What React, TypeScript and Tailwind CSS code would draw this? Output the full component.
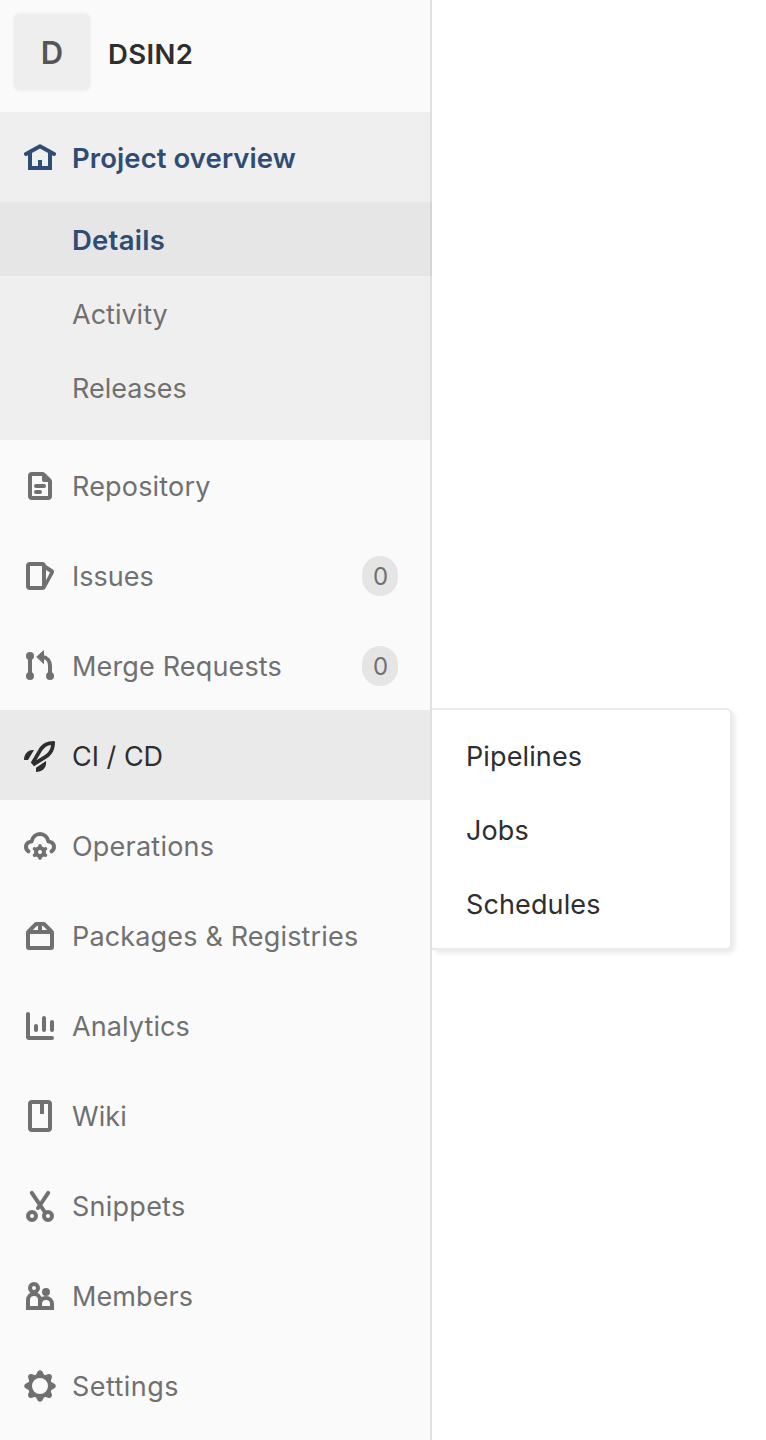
import type { ReactNode } from "react";

function Icon({ children }: { children: ReactNode }) {
  return (
    <svg
      viewBox="0 0 32 32"
      className="h-8 w-8 shrink-0"
      fill="none"
      stroke="currentColor"
      strokeWidth={4}
      strokeLinecap="round"
      strokeLinejoin="round"
      aria-hidden="true"
    >
      {children}
    </svg>
  );
}

const HomeIcon = () => (
  <Icon>
    <path d="M2 12 16 4.2 30 12" />
    <path d="M6 11V26H26V11" strokeLinecap="butt" strokeLinejoin="miter" />
    <path d="M16 18V26" strokeLinecap="butt" />
  </Icon>
);

const DocumentIcon = () => (
  <Icon>
    <path
      fill="currentColor"
      stroke="none"
      fillRule="evenodd"
      d="M8 2H18.4a4 4 0 0 1 2.8 1.2l5.6 5.6A4 4 0 0 1 28 11.6V26a4 4 0 0 1-4 4H8a4 4 0 0 1-4-4V6a4 4 0 0 1 4-4zM8 6V26H24V12H20a2 2 0 0 1-2-2V6z"
    />
    <path d="M12 16H20M12 22H16" />
  </Icon>
);

const IssuesIcon = () => (
  <Icon>
    <rect x="4" y="4" width="16" height="24" rx="2" />
    <path
      fill="currentColor"
      stroke="none"
      fillRule="evenodd"
      d="M21.5 4.8 28.9 9.6a2.6 2.6 0 0 1 .9 3.4L21.5 28.2zM22 10V20.2L26 12.4z"
    />
  </Icon>
);

const MergeIcon = () => (
  <Icon>
    <path d="M6 6V26M19 7C23 7.5 26 11 26 16V26" />
    <circle cx="6" cy="6" r="4" fill="currentColor" stroke="none" />
    <circle cx="6" cy="26" r="4" fill="currentColor" stroke="none" />
    <circle cx="26" cy="26" r="4" fill="currentColor" stroke="none" />
    <path d="M13 6.7 19.5 .8V13.2z" fill="currentColor" strokeWidth={1} />
  </Icon>
);

const RocketIcon = () => (
  <Icon>
    <path
      fill="currentColor"
      stroke="none"
      fillRule="evenodd"
      d="M29.8 1C23 1 17.6 3.9 14.6 9.2L6.8 22.6 10 26.3 23.2 18C28.4 14.6 31 9 31 2.2A1.2 1.2 0 0 0 29.8 1zM27 5C23.5 5.3 20 7.5 17.9 11L12.4 20.2 21.3 14.7C24.8 12.4 26.7 9 27 5z"
    />
    <path fill="currentColor" stroke="none" d="M10 10.1C4 9.3 0 14 0 20H4zM22 21 12 27.8V32C18.5 32 23 27.5 22 21z" />
  </Icon>
);

const CloudGearIcon = () => (
  <Icon>
    <path d="M4.4 21.3C2.7 20.2 2 18.5 2 16.8 2 13.8 4.5 11.6 7.6 11.4 8.5 7 12 4 16 4s7.5 3 8.4 7.4C27.5 11.6 30 13.8 30 16.8c0 1.7-.7 3.4-2.4 4.5" />
    <circle cx="16" cy="22" r="4" strokeWidth={4} />
    <path
      strokeWidth={3.4}
      d="M16 17V15.7M16 27V28.3M11.7 19.5 10.4 18.8M20.3 24.5 21.6 25.2M11.7 24.5 10.4 25.2M20.3 19.5 21.6 18.8"
    />
  </Icon>
);

const PackageIcon = () => (
  <Icon>
    <rect x="4" y="12" width="24" height="16" rx="1" />
    <path d="M4.6 11.4 12 4H20L27.4 11.4M16 4V12" />
  </Icon>
);

const ChartIcon = () => (
  <Icon>
    <path d="M4 4V27A1 1 0 0 0 5 28H28M12 16V20M20 8V20M28 12V20" />
  </Icon>
);

const BookIcon = () => (
  <Icon>
    <rect x="6" y="2" width="20" height="28" rx="2" />
    <path d="M18 3V14" strokeLinecap="butt" />
  </Icon>
);

const ScissorsIcon = () => (
  <Icon>
    <path d="M7.8 2.8 20.8 22M24.2 2.8 14 18" />
    <circle cx="8" cy="26" r="4" />
    <circle cx="24" cy="26" r="4" />
  </Icon>
);

const MembersIcon = () => (
  <Icon>
    <circle cx="10" cy="8" r="4" />
    <circle cx="22" cy="12" r="4" fill="currentColor" stroke="none" />
    <path strokeLinejoin="miter" d="M4 28V20a6 6 0 0 1 12 0V28zM16 28V24a6 6 0 0 1 12 0V28z" />
  </Icon>
);

const GearIcon = () => (
  <Icon>
    <circle cx="16" cy="16" r="10" />
    {[0, 45, 90, 135, 180, 225, 270, 315].map((angle) => (
      <path
        key={angle}
        transform={`rotate(${angle} 16 16)`}
        fill="currentColor"
        strokeWidth={3}
        d="M13.6 5 15 2.2Q16 1.2 17 2.2L18.4 5z"
      />
    ))}
  </Icon>
);

function FlyoutMenu() {
  return (
    <div className="absolute -top-0.5 left-full ml-0.5 w-[300px] rounded-r-[6px] border-y-2 border-r-2 border-[#ebebeb] bg-white pb-1.5 pt-2.5 tracking-[0.12px] text-[#2e2e2e] shadow-[3px_3px_5px_0px_rgba(0,0,0,0.09)]">
      {["Pipelines", "Jobs", "Schedules"].map((name) => (
        <a key={name} className="flex h-[74px] items-center pl-[34px]">
          {name}
        </a>
      ))}
    </div>
  );
}

type Item = { name: string; icon: ReactNode; count?: number; active?: boolean; tracking?: string };

const items: Item[] = [
  { name: "Repository", icon: <DocumentIcon />, tracking: "tracking-[0.18px]" },
  { name: "Issues", icon: <IssuesIcon />, count: 0 },
  { name: "Merge Requests", icon: <MergeIcon />, count: 0, tracking: "tracking-[0.16px]" },
  { name: "CI / CD", icon: <RocketIcon />, active: true },
  { name: "Operations", icon: <CloudGearIcon />, tracking: "tracking-[0.22px]" },
  { name: "Packages & Registries", icon: <PackageIcon />, tracking: "tracking-[0.16px]" },
  { name: "Analytics", icon: <ChartIcon />, tracking: "tracking-[0.1px]" },
  { name: "Wiki", icon: <BookIcon />, tracking: "tracking-[0.1px]" },
  { name: "Snippets", icon: <ScissorsIcon />, tracking: "tracking-[0.25px]" },
  { name: "Members", icon: <MembersIcon />, tracking: "tracking-[0.1px]" },
  { name: "Settings", icon: <GearIcon />, tracking: "tracking-[0.45px]" },
];

function NavItem({ item }: { item: Item }) {
  return (
    <li
      className={
        item.active
          ? "relative flex h-[90px] items-center bg-[#eaeaea] pl-6 pr-8 text-[#2e2e2e]"
          : "flex h-[90px] items-center pl-6 pr-8"
      }
    >
      <span className="flex pt-0.5">{item.icon}</span>
      <span className={`ml-4 flex-1 whitespace-nowrap pt-1 ${item.tracking ?? "tracking-normal"}`}>{item.name}</span>
      {item.count !== undefined && (
        <span className="mt-0.5 flex h-10 w-9 items-center justify-center rounded-[20px] bg-[#e5e5e5] pl-px pt-0.5 text-[24px]">
          {item.count}
        </span>
      )}
      {item.active && <FlyoutMenu />}
    </li>
  );
}

export default function App() {
  return (
    <div className="flex h-[1440px] w-[766px] overflow-hidden bg-white font-['Inter',sans-serif] text-[27px] leading-[40px] text-[#707070]">
      <aside className="flex w-[432px] flex-col">
        <header className="flex h-[112px] items-start border-r-2 border-[#e1e1e1] bg-[#fafafa] pl-3.5 pt-3.5">
          <div className="flex h-[76px] w-[76px] items-center justify-center rounded-[6px] bg-[#eeeeee] pt-0.5 text-[31px] font-semibold text-[#555555] shadow-[0_0_0_2px_#f5f5f5]">
            D
          </div>
          <span className="ml-[18px] pt-5 text-[27.5px] font-semibold tracking-[0.4px] text-[#2e2e2e]">DSIN2</span>
        </header>
        <section className="h-[328px] border-r-2 border-[#dfdfdf] bg-[#efefef]">
          <div className="flex h-[90px] items-center pl-6 text-[27.5px] font-semibold text-[#2f4d74]">
            <span className="flex pt-0.5">
              <HomeIcon />
            </span>
            <span className="ml-4 pt-0.5 tracking-[0.08px]">Project overview</span>
          </div>
          <ul>
            <li className="-mr-0.5 flex h-[74px] items-center border-r-2 border-[#d5d5d5] bg-[#e6e6e6] pl-[72px] pt-0.5 text-[27.5px] font-semibold tracking-[0.25px] text-[#2f4d74]">
              Details
            </li>
            <li className="flex h-[74px] items-center pl-[72px] pt-1">Activity</li>
            <li className="flex h-[74px] items-center pl-[72px] pt-1">Releases</li>
          </ul>
        </section>
        <ul className="flex-1 border-r-2 border-[#e1e1e1] bg-[#fafafa]">
          {items.map((item) => (
            <NavItem key={item.name} item={item} />
          ))}
        </ul>
      </aside>
    </div>
  );
}
